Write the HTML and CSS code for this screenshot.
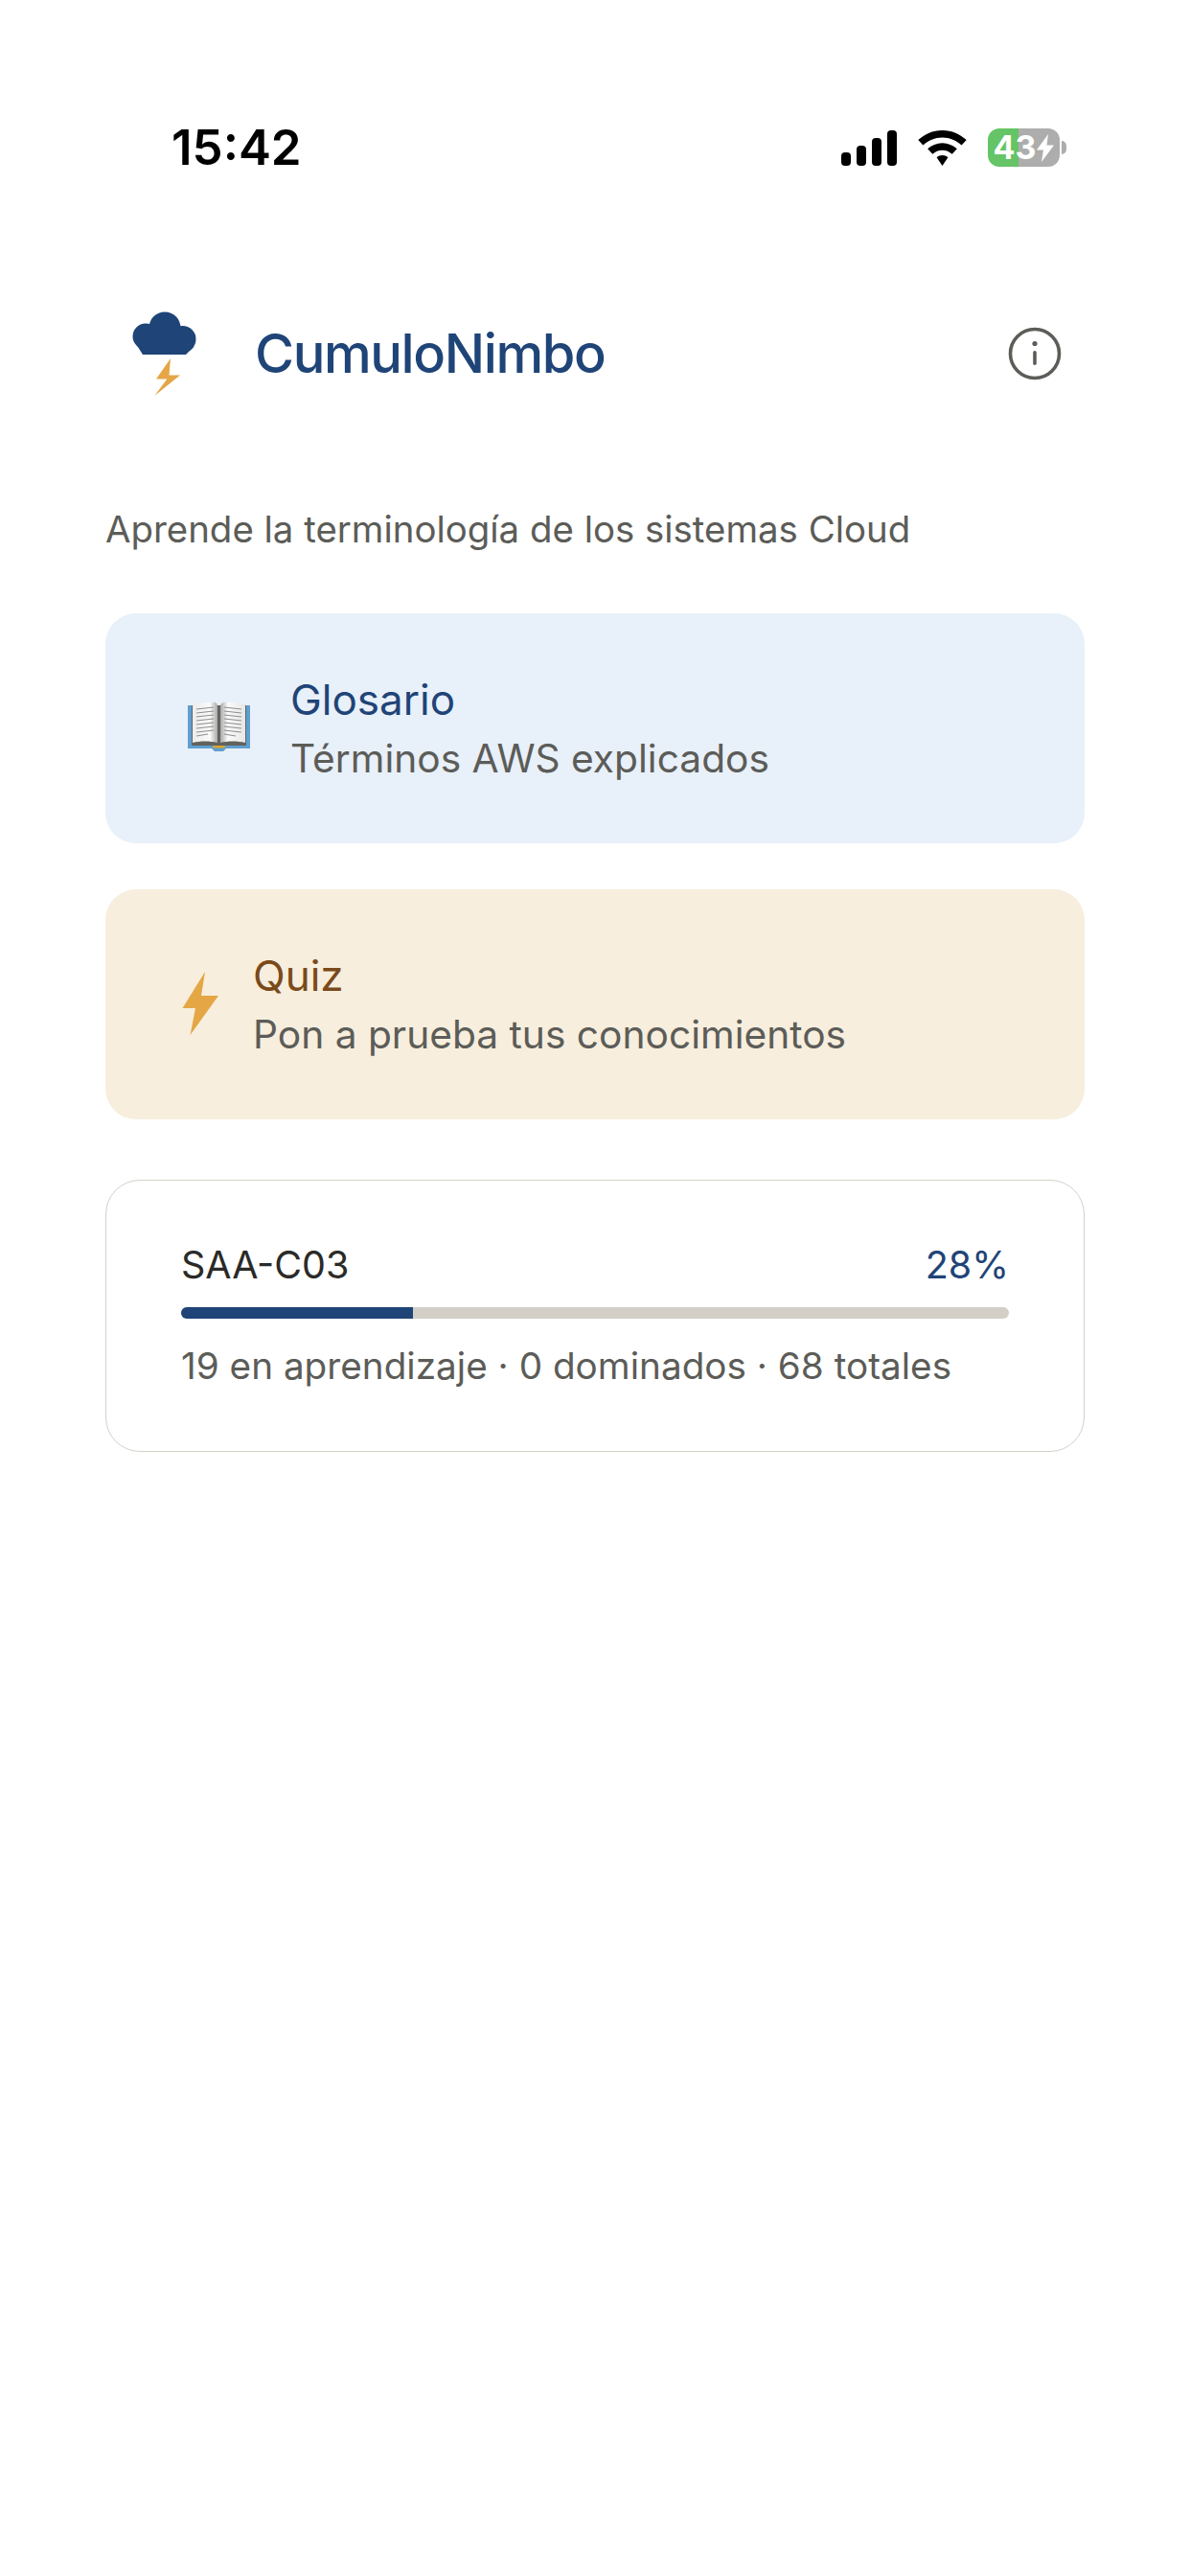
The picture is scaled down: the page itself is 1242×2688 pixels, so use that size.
FILE: index.html
```html
<!DOCTYPE html>
<html lang="es">
<head>
    <meta charset="UTF-8">
    <meta name="viewport" content="width=device-width, initial-scale=1.0">
    <title>CumuloNimbo</title>
    <link rel="stylesheet" href="styles.css">
</head>
<body>
    <div class="status-bar">
        <span class="time">15:42</span>
        <div class="status-icons">
            <svg class="signal" width="58" height="37" viewBox="0 0 58 37">
                <rect x="0" y="23" width="10" height="14" rx="4" />
                <rect x="16" y="16" width="10" height="21" rx="4" />
                <rect x="32" y="8" width="10" height="29" rx="4" />
                <rect x="48" y="0" width="10" height="37" rx="4" />
            </svg>
            <svg class="wifi" width="51" height="37" viewBox="0 0 51 37">
                <path d="M25.5 0C15.6 0 7 3.9 0.3 10.1L5.4 15.6C10.8 10.6 17.8 7.5 25.5 7.5S40.2 10.6 45.6 15.6L50.7 10.1C44 3.9 35.4 0 25.5 0Z" />
                <path d="M25.5 13.2C19.6 13.2 14.3 15.5 10.2 19.3L15.3 24.8C18 22.3 21.6 20.7 25.5 20.7S33 22.3 35.7 24.8L40.8 19.3C36.7 15.5 31.4 13.2 25.5 13.2Z" />
                <path d="M25.5 26C23.2 26 21.2 26.9 19.6 28.3L25.5 37L31.4 28.3C29.8 26.9 27.8 26 25.5 26Z" />
            </svg>
            <div class="battery">
                <div class="battery-body">
                    <span>43</span>
                    <svg width="18" height="29" viewBox="0 0 18 29">
                        <path d="M12 0L0 16.5H7L5 29L18 11.5H10.5Z" />
                    </svg>
                </div>
                <div class="battery-tip"></div>
            </div>
        </div>
    </div>

    <main class="content">
        <header class="app-header">
            <div class="brand">
                <svg class="logo" width="68" height="90" viewBox="0 0 68 90">
                    <g fill="#1f4477">
                        <circle cx="34" cy="17" r="16.5" />
                        <circle cx="14" cy="26" r="13.5" />
                        <circle cx="52.5" cy="29" r="14" />
                        <path d="M4 34L11 45H56L64 37V22H4Z" />
                    </g>
                    <path fill="#e5a645" d="M40 49L25 70.5H36.3L23.3 88L50 66.5H38.5Z" />
                </svg>
                <h1>CumuloNimbo</h1>
            </div>
            <svg class="info" width="56" height="56" viewBox="0 0 56 56">
                <circle cx="28" cy="28" r="25.5" fill="none" stroke="#5c5c58" stroke-width="3.6" />
                <circle cx="28" cy="17.5" r="2.6" fill="#5c5c58" />
                <rect x="26.2" y="25" width="3.6" height="15" rx="1.8" fill="#5c5c58" />
            </svg>
        </header>

        <p class="tagline">Aprende la terminología de los sistemas Cloud</p>

        <div class="menu-card glossary">
            <svg class="book" width="66" height="52" viewBox="0 0 66 52">
                <defs>
                    <linearGradient id="pageLeft" x1="0" x2="1" y1="0" y2="0">
                        <stop offset="0" stop-color="#ececec" />
                        <stop offset="0.7" stop-color="#fafafa" />
                        <stop offset="1" stop-color="#a8a8a8" />
                    </linearGradient>
                    <linearGradient id="pageRight" x1="0" x2="1" y1="0" y2="0">
                        <stop offset="0" stop-color="#a8a8a8" />
                        <stop offset="0.3" stop-color="#fafafa" />
                        <stop offset="1" stop-color="#e6e6e6" />
                    </linearGradient>
                </defs>
                <path fill="#5f9fd0" d="M0 4H65V49H40L37 52H28L25 49H0Z" />
                <path fill="#62625f" d="M4 4H61V46H36L32.5 47L29 46H4Z" />
                <path fill="url(#pageLeft)" d="M5 3C14 2 22 0 29 1Q31 2 31 5V43C23 41 13 41 5 43Z" />
                <path fill="url(#pageRight)" d="M34 5Q34 2 37 1C44 0 52 2 60 3V43C52 41 42 41 34 43Z" />
                <g stroke="#8f8f8f" stroke-width="1.1">
                    <path d="M9 8L27 6M9 12L27 10M9 16L27 14M9 20L27 18M9 24L27 22M9 28L27 26M9 32L27 30M9 36L21 34" />
                    <path d="M38 6L56 8M38 10L56 12M38 14L56 16M38 18L56 20M38 22L56 24M38 26L56 28M38 30L56 32M38 34L50 36" />
                </g>
                <rect x="26" y="46" width="13" height="2.5" rx="1" fill="#d9a62c" />
            </svg>
            <div class="card-text">
                <div class="card-title">Glosario</div>
                <div class="card-sub">Términos AWS explicados</div>
            </div>
        </div>

        <div class="menu-card quiz">
            <svg class="bolt" width="40" height="66" viewBox="0 0 40 66">
                <path fill="#e5a645" d="M24 0L0.5 38H14L8.5 66L38 25H20Z" />
            </svg>
            <div class="card-text">
                <div class="card-title">Quiz</div>
                <div class="card-sub">Pon a prueba tus conocimientos</div>
            </div>
        </div>

        <div class="progress-card">
            <div class="progress-head">
                <span class="cert-name">SAA-C03</span>
                <span class="cert-pct">28%</span>
            </div>
            <div class="progress-track">
                <div class="progress-fill" style="width: 28%"></div>
            </div>
            <div class="progress-note">19 en aprendizaje · 0 dominados · 68 totales</div>
        </div>
    </main>
</body>
</html>
```

FILE: styles.css
```css
body {
    margin: 0;
    background-color: #ffffff;
    font-family: Inter, "Liberation Sans", sans-serif;
    color: #5c5c58;
}
.status-bar {
    display: flex;
    justify-content: space-between;
    align-items: center;
    height: 40px;
    padding: 134px 129px 0 179px;
}
.time {
    font-size: 51px;
    font-weight: 600;
    line-height: 40px;
    color: #000000;
}
.status-icons {
    display: flex;
    align-items: center;
    gap: 22px;
}
.battery {
    display: flex;
    align-items: center;
    gap: 2px;
}
.battery-body {
    display: flex;
    align-items: center;
    justify-content: center;
    gap: 1px;
    width: 75px;
    height: 40px;
    border-radius: 12px;
    background: linear-gradient(to right, #65c466 43%, #adadad 43%);
    color: #ffffff;
    font-size: 34px;
    font-weight: 700;
    line-height: 40px;
}
.battery-body svg {
    fill: #ffffff;
}
.battery-tip {
    width: 5px;
    height: 14px;
    border-radius: 0 7px 7px 0;
    background-color: #adadad;
}
.content {
    padding: 0 110px;
}
.app-header {
    display: flex;
    justify-content: space-between;
    align-items: center;
    margin-top: 148px;
    padding-right: 24px;
}
.brand {
    display: flex;
    align-items: center;
    gap: 60px;
    padding-left: 28px;
}
.logo {
    margin-top: 3px;
}
h1 {
    margin: 0;
    font-size: 56px;
    font-weight: 450;
    letter-spacing: -1.4px;
    color: #1f4477;
}
.tagline {
    margin: 112px 0 0;
    font-size: 38.4px;
    line-height: 50px;
}
.menu-card {
    display: flex;
    align-items: center;
    height: 240px;
    box-sizing: border-box;
    border-radius: 32px;
    margin-top: 48px;
}
.tagline + .menu-card {
    margin-top: 63px;
}
.glossary {
    background-color: #e8f0f9;
    padding-left: 86px;
    gap: 41px;
}
.quiz {
    background-color: #f7eedd;
    padding-left: 80px;
    gap: 34px;
}
.book {
    margin-bottom: 4px;
}
.bolt {
    margin-bottom: 3px;
}
.card-text {
    padding-bottom: 1px;
}
.card-title {
    font-size: 44px;
    font-weight: 420;
    line-height: 56px;
}
.glossary .card-title {
    color: #1f4477;
}
.quiz .card-title {
    color: #7a4a1a;
}
.card-sub {
    font-size: 40.7px;
    line-height: 50px;
    margin-top: 9px;
}
.progress-card {
    box-sizing: border-box;
    height: 284px;
    margin-top: 63px;
    padding: 63px 78px 0 78px;
    border: 1px solid #d3d1c9;
    border-radius: 36px;
}
.progress-head {
    display: flex;
    justify-content: space-between;
    line-height: 50px;
    font-size: 39.5px;
}
.cert-name {
    color: #2a2a28;
}
.cert-pct {
    color: #1f4477;
}
.progress-track {
    height: 12px;
    margin-top: 19px;
    border-radius: 6px;
    background-color: #d3cfc7;
    overflow: hidden;
}
.progress-fill {
    height: 100%;
    background-color: #1f4477;
}
.progress-note {
    margin-top: 24px;
    font-size: 38.7px;
    line-height: 50px;
}
```
